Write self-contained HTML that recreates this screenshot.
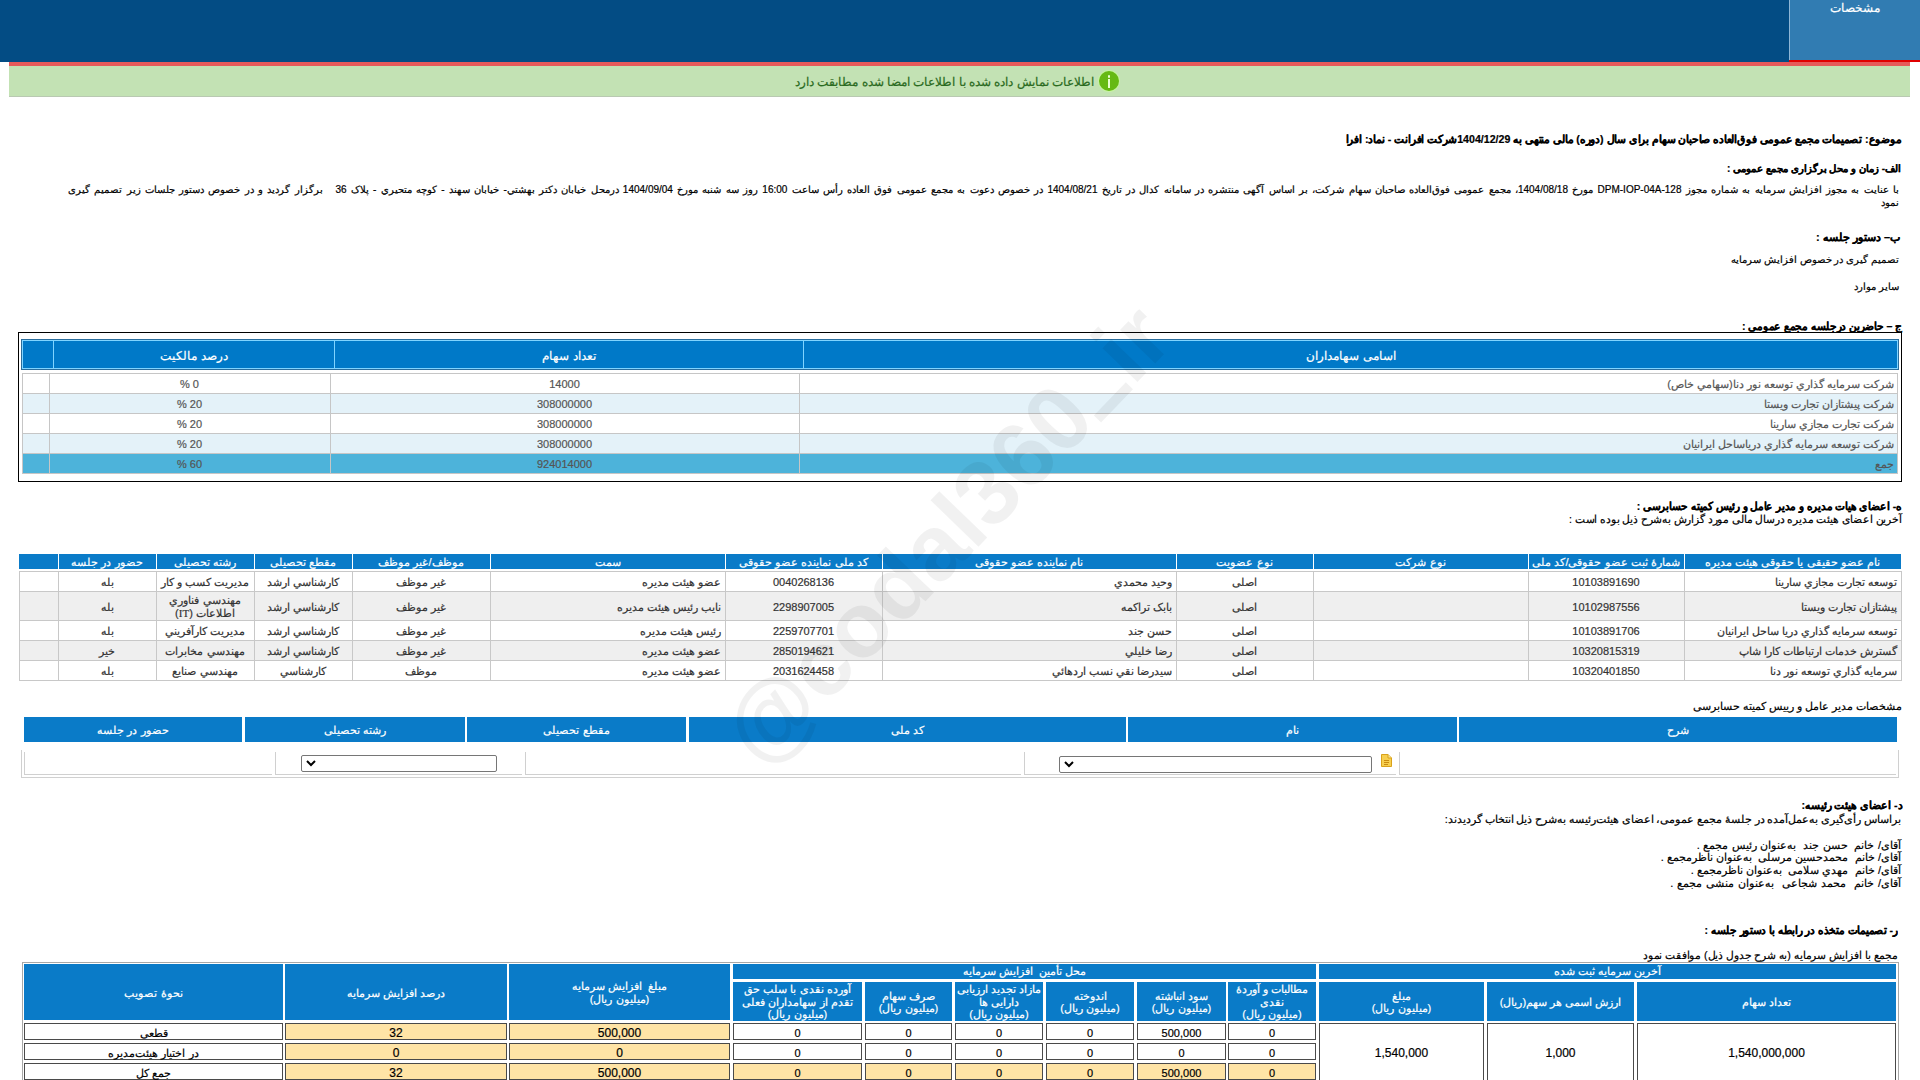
<!DOCTYPE html>
<html lang="fa" dir="rtl">
<head>
<meta charset="utf-8">
<title>codal</title>
<style>
html,body{margin:0;padding:0;background:#fff;}
body{width:1920px;height:1080px;overflow:hidden;position:relative;font-family:"Liberation Sans",sans-serif;direction:rtl;color:#000;}
.p{position:absolute;}
.t{white-space:nowrap;overflow:visible;-webkit-text-stroke:0.2px currentColor;}
</style>
</head>
<body>
<div class="p" style="left:0px;top:0px;width:1920px;height:62px;background:#034c84;"></div>
<div class="p" style="left:1789px;top:0px;width:131px;height:60px;background:#317cb2;"></div>
<div class="p" style="left:1789px;top:0px;width:1px;height:60px;background:#8fb6d6;"></div>
<div class="p t" style="left:1789px;top:-0.2px;width:131px;height:16px;line-height:16px;font-size:12px;color:#fff;text-align:center;">مشخصات</div>
<div class="p" style="left:1789px;top:60px;width:131px;height:2px;background:#e00000;"></div>
<div class="p" style="left:9px;top:62px;width:1901px;height:4px;background:#e65a5a;"></div>
<div class="p" style="left:9px;top:66px;width:1901px;height:30px;background:#c3e2b4;"></div>
<div class="p" style="left:9px;top:96px;width:1901px;height:1px;background:#b9c9b2;"></div>
<div class="p t" style="left:600px;top:74.3px;width:494px;height:16px;line-height:16px;font-size:12px;color:#2a6a1e;text-align:right;">اطلاعات نمایش داده شده با اطلاعات امضا شده مطابقت دارد</div>
<div class="p" style="left:1098.5px;top:70.8px;width:20px;height:20px;border-radius:50%;background:#66b914;box-shadow:0 0 0 1px rgba(200,255,150,0.6);"></div>
<div class="p" style="left:1107.5px;top:75px;width:2.5px;height:2.5px;background:#e8ffd0;border-radius:1px;"></div>
<div class="p" style="left:1107.8px;top:79px;width:2.0px;height:8.5px;background:#e8ffd0;"></div>
<div class="p t" style="left:900px;top:131.5px;width:1001px;height:15px;line-height:15px;font-size:11px;color:#000;text-align:right;font-weight:bold;"><span style="display:inline-block;transform:scaleX(0.966);transform-origin:100% 50%;">موضوع: تصمیمات مجمع عمومی فوق‌العاده صاحبان سهام برای سال (دوره) مالی منتهی به 1404/12/29شرکت افرانت - نماد: افرا</span></div>
<div class="p t" style="left:1200px;top:162.0px;width:701px;height:14px;line-height:14px;font-size:10px;color:#000;text-align:right;font-weight:bold;">الف- زمان و محل برگزاری مجمع عمومی :</div>
<div class="p t" style="left:0px;top:182.5px;width:1899px;height:14px;line-height:14px;font-size:10px;color:#000;text-align:right;word-spacing:1.5px;">با عنایت به مجوز افزایش سرمایه به شماره مجوز DPM-IOP-04A-128 مورخ 1404/08/18، مجمع عمومی فوق‌العاده صاحبان سهام شرکت، بر اساس آگهی منتشره در سامانه کدال در تاریخ 1404/08/21 در خصوص دعوت به مجمع عمومی فوق العاده رأس ساعت 16:00 روز سه شنبه مورخ 1404/09/04 درمحل خیابان دکتر بهشتي- خیابان سهند - کوچه متحیري - پلاک 36&nbsp;&nbsp; برگزار گردید و در خصوص دستور جلسات زیر تصمیم گیری</div>
<div class="p t" style="left:1500px;top:195.5px;width:399px;height:14px;line-height:14px;font-size:10px;color:#000;text-align:right;">نمود</div>
<div class="p t" style="left:1500px;top:229.5px;width:400px;height:15px;line-height:15px;font-size:11px;color:#000;text-align:right;font-weight:bold;">ب– دستور جلسه :</div>
<div class="p t" style="left:1500px;top:253.0px;width:399px;height:14px;line-height:14px;font-size:10px;color:#000;text-align:right;">تصمیم گیری در خصوص افزایش سرمایه</div>
<div class="p t" style="left:1500px;top:280.0px;width:399px;height:14px;line-height:14px;font-size:10px;color:#000;text-align:right;">سایر موارد</div>
<div class="p t" style="left:1500px;top:318.5px;width:402px;height:15px;line-height:15px;font-size:11px;color:#000;text-align:right;font-weight:bold;"><span style="display:inline-block;transform:scaleX(0.958);transform-origin:100% 50%;">ج – حاضرین درجلسه مجمع عمومی :</span></div>
<div class="p" style="left:18px;top:332px;width:1884px;height:150px;box-sizing:border-box;border:1px solid #000;"></div>
<div class="p" style="left:21px;top:339px;width:1878px;height:31px;background:#0079c8;box-sizing:border-box;border:1px solid #2a6d9c;"></div>
<div class="p" style="left:22px;top:340px;width:32px;height:29px;box-sizing:border-box;border:1px solid #80d4ff;"></div>
<div class="p" style="left:53px;top:340px;width:282px;height:29px;box-sizing:border-box;border:1px solid #80d4ff;"></div>
<div class="p" style="left:334px;top:340px;width:470px;height:29px;box-sizing:border-box;border:1px solid #80d4ff;"></div>
<div class="p" style="left:803px;top:340px;width:1095px;height:29px;box-sizing:border-box;border:1px solid #80d4ff;"></div>
<div class="p t" style="left:54px;top:347.5px;width:280px;height:16px;line-height:16px;font-size:12px;color:#fff;text-align:center;">درصد مالکیت</div>
<div class="p t" style="left:335px;top:347.5px;width:468px;height:16px;line-height:16px;font-size:12px;color:#fff;text-align:center;">تعداد سهام</div>
<div class="p t" style="left:804px;top:347.5px;width:1094px;height:16px;line-height:16px;font-size:12px;color:#fff;text-align:center;">اسامی سهامداران</div>
<div class="p" style="left:22px;top:373px;width:1876px;height:20px;background:#fff;"></div>
<div class="p t" style="left:800px;top:376.5px;width:1094px;height:15px;line-height:15px;font-size:11px;color:#555;text-align:right;">شرکت سرمایه گذاري توسعه نور دنا(سهامي خاص)</div>
<div class="p t" style="left:330px;top:376.5px;width:469px;height:15px;line-height:15px;font-size:11px;color:#555;text-align:center;">14000</div>
<div class="p t" style="left:49px;top:376.5px;width:281px;height:15px;line-height:15px;font-size:11px;color:#555;text-align:center;direction:ltr;">% 0</div>
<div class="p" style="left:22px;top:393px;width:1876px;height:20px;background:#e4f2f9;"></div>
<div class="p t" style="left:800px;top:396.5px;width:1094px;height:15px;line-height:15px;font-size:11px;color:#555;text-align:right;">شرکت پيشتازان تجارت ويستا</div>
<div class="p t" style="left:330px;top:396.5px;width:469px;height:15px;line-height:15px;font-size:11px;color:#555;text-align:center;">308000000</div>
<div class="p t" style="left:49px;top:396.5px;width:281px;height:15px;line-height:15px;font-size:11px;color:#555;text-align:center;direction:ltr;">% 20</div>
<div class="p" style="left:22px;top:413px;width:1876px;height:20px;background:#fff;"></div>
<div class="p t" style="left:800px;top:416.5px;width:1094px;height:15px;line-height:15px;font-size:11px;color:#555;text-align:right;">شرکت تجارت مجازي سارينا</div>
<div class="p t" style="left:330px;top:416.5px;width:469px;height:15px;line-height:15px;font-size:11px;color:#555;text-align:center;">308000000</div>
<div class="p t" style="left:49px;top:416.5px;width:281px;height:15px;line-height:15px;font-size:11px;color:#555;text-align:center;direction:ltr;">% 20</div>
<div class="p" style="left:22px;top:433px;width:1876px;height:20px;background:#e4f2f9;"></div>
<div class="p t" style="left:800px;top:436.5px;width:1094px;height:15px;line-height:15px;font-size:11px;color:#555;text-align:right;">شرکت توسعه سرمايه گذاري درياساحل ايرانيان</div>
<div class="p t" style="left:330px;top:436.5px;width:469px;height:15px;line-height:15px;font-size:11px;color:#555;text-align:center;">308000000</div>
<div class="p t" style="left:49px;top:436.5px;width:281px;height:15px;line-height:15px;font-size:11px;color:#555;text-align:center;direction:ltr;">% 20</div>
<div class="p" style="left:22px;top:453px;width:1876px;height:20px;background:#4db3da;"></div>
<div class="p t" style="left:800px;top:456.5px;width:1094px;height:15px;line-height:15px;font-size:11px;color:#555;text-align:right;">جمع</div>
<div class="p t" style="left:330px;top:456.5px;width:469px;height:15px;line-height:15px;font-size:11px;color:#555;text-align:center;">924014000</div>
<div class="p t" style="left:49px;top:456.5px;width:281px;height:15px;line-height:15px;font-size:11px;color:#555;text-align:center;direction:ltr;">% 60</div>
<div class="p" style="left:22px;top:373px;width:1876px;height:1px;background:#c6c6c6;"></div>
<div class="p" style="left:22px;top:393px;width:1876px;height:1px;background:#c6c6c6;"></div>
<div class="p" style="left:22px;top:413px;width:1876px;height:1px;background:#c6c6c6;"></div>
<div class="p" style="left:22px;top:433px;width:1876px;height:1px;background:#c6c6c6;"></div>
<div class="p" style="left:22px;top:453px;width:1876px;height:1px;background:#c6c6c6;"></div>
<div class="p" style="left:22px;top:473px;width:1876px;height:1px;background:#c6c6c6;"></div>
<div class="p" style="left:22px;top:373px;width:1px;height:101px;background:#c6c6c6;"></div>
<div class="p" style="left:49px;top:373px;width:1px;height:101px;background:#c6c6c6;"></div>
<div class="p" style="left:330px;top:373px;width:1px;height:101px;background:#c6c6c6;"></div>
<div class="p" style="left:799px;top:373px;width:1px;height:101px;background:#c6c6c6;"></div>
<div class="p" style="left:1897px;top:373px;width:1px;height:101px;background:#c6c6c6;"></div>
<div class="p t" style="left:1200px;top:498.5px;width:702px;height:15px;line-height:15px;font-size:11px;color:#000;text-align:right;font-weight:bold;"><span style="display:inline-block;transform:scaleX(0.954);transform-origin:100% 50%;">ه- اعضای هیات مدیره و مدیر عامل و رئیس کمیته حسابرسی :</span></div>
<div class="p t" style="left:1200px;top:512.0px;width:702px;height:15px;line-height:15px;font-size:11px;color:#000;text-align:right;"><span style="display:inline-block;transform:scaleX(0.968);transform-origin:100% 50%;">آخرین اعضای هیئت مدیره درسال مالی مورد گزارش به‌شرح ذیل بوده است :</span></div>
<div class="p" style="left:19px;top:554px;width:1882px;height:15px;background:#0a7bc8;"></div>
<div class="p" style="left:58px;top:554px;width:1px;height:15px;background:#fff;"></div>
<div class="p" style="left:156px;top:554px;width:1px;height:15px;background:#fff;"></div>
<div class="p" style="left:254px;top:554px;width:1px;height:15px;background:#fff;"></div>
<div class="p" style="left:352px;top:554px;width:1px;height:15px;background:#fff;"></div>
<div class="p" style="left:490px;top:554px;width:1px;height:15px;background:#fff;"></div>
<div class="p" style="left:725px;top:554px;width:1px;height:15px;background:#fff;"></div>
<div class="p" style="left:882px;top:554px;width:1px;height:15px;background:#fff;"></div>
<div class="p" style="left:1176px;top:554px;width:1px;height:15px;background:#fff;"></div>
<div class="p" style="left:1313px;top:554px;width:1px;height:15px;background:#fff;"></div>
<div class="p" style="left:1528px;top:554px;width:1px;height:15px;background:#fff;"></div>
<div class="p" style="left:1684px;top:554px;width:1px;height:15px;background:#fff;"></div>
<div class="p t" style="left:58px;top:554.5px;width:98px;height:15px;line-height:15px;font-size:11px;color:#fff;text-align:center;">حضور در جلسه</div>
<div class="p t" style="left:156px;top:554.5px;width:98px;height:15px;line-height:15px;font-size:11px;color:#fff;text-align:center;">رشته تحصیلی</div>
<div class="p t" style="left:254px;top:554.5px;width:98px;height:15px;line-height:15px;font-size:11px;color:#fff;text-align:center;">مقطع تحصیلی</div>
<div class="p t" style="left:352px;top:554.5px;width:138px;height:15px;line-height:15px;font-size:11px;color:#fff;text-align:center;">موظف/غیر موظف</div>
<div class="p t" style="left:490px;top:554.5px;width:235px;height:15px;line-height:15px;font-size:11px;color:#fff;text-align:center;">سمت</div>
<div class="p t" style="left:725px;top:554.5px;width:157px;height:15px;line-height:15px;font-size:11px;color:#fff;text-align:center;">کد ملی نماینده عضو حقوقی</div>
<div class="p t" style="left:882px;top:554.5px;width:294px;height:15px;line-height:15px;font-size:11px;color:#fff;text-align:center;">نام نماینده عضو حقوقی</div>
<div class="p t" style="left:1176px;top:554.5px;width:137px;height:15px;line-height:15px;font-size:11px;color:#fff;text-align:center;">نوع عضویت</div>
<div class="p t" style="left:1313px;top:554.5px;width:215px;height:15px;line-height:15px;font-size:11px;color:#fff;text-align:center;">نوع شرکت</div>
<div class="p t" style="left:1528px;top:554.5px;width:156px;height:15px;line-height:15px;font-size:11px;color:#fff;text-align:center;">شمارهٔ ثبت عضو حقوقی/کد ملی</div>
<div class="p t" style="left:1684px;top:554.5px;width:217px;height:15px;line-height:15px;font-size:11px;color:#fff;text-align:center;">نام عضو حقیقی یا حقوقی هیئت مدیره</div>
<div class="p" style="left:19px;top:571px;width:1882px;height:20px;background:#fff;"></div>
<div class="p t" style="left:1684px;top:575.0px;width:217px;height:15px;line-height:15px;font-size:11px;color:#333;text-align:right;padding:0 4px;box-sizing:border-box;">توسعه تجارت مجازي سارينا</div>
<div class="p t" style="left:1528px;top:575.0px;width:156px;height:15px;line-height:15px;font-size:11px;color:#333;text-align:center;padding:0 4px;box-sizing:border-box;">10103891690</div>
<div class="p t" style="left:1176px;top:575.0px;width:137px;height:15px;line-height:15px;font-size:11px;color:#333;text-align:center;padding:0 4px;box-sizing:border-box;">اصلی</div>
<div class="p t" style="left:882px;top:575.0px;width:294px;height:15px;line-height:15px;font-size:11px;color:#333;text-align:right;padding:0 4px;box-sizing:border-box;">وحيد محمدي</div>
<div class="p t" style="left:725px;top:575.0px;width:157px;height:15px;line-height:15px;font-size:11px;color:#333;text-align:center;padding:0 4px;box-sizing:border-box;">0040268136</div>
<div class="p t" style="left:490px;top:575.0px;width:235px;height:15px;line-height:15px;font-size:11px;color:#333;text-align:right;padding:0 4px;box-sizing:border-box;">عضو هيئت مديره</div>
<div class="p t" style="left:352px;top:575.0px;width:138px;height:15px;line-height:15px;font-size:11px;color:#333;text-align:center;padding:0 4px;box-sizing:border-box;">غير موظف</div>
<div class="p t" style="left:254px;top:575.0px;width:98px;height:15px;line-height:15px;font-size:11px;color:#333;text-align:center;padding:0 4px;box-sizing:border-box;">كارشناسي ارشد</div>
<div class="p t" style="left:156px;top:575.0px;width:98px;height:15px;line-height:15px;font-size:11px;color:#333;text-align:center;padding:0 4px;box-sizing:border-box;">مديريت كسب و كار</div>
<div class="p t" style="left:58px;top:575.0px;width:98px;height:15px;line-height:15px;font-size:11px;color:#333;text-align:center;padding:0 4px;box-sizing:border-box;">بله</div>
<div class="p" style="left:19px;top:591px;width:1882px;height:29px;background:#efefef;"></div>
<div class="p t" style="left:1684px;top:599.5px;width:217px;height:15px;line-height:15px;font-size:11px;color:#333;text-align:right;padding:0 4px;box-sizing:border-box;">پيشتازان تجارت ويستا</div>
<div class="p t" style="left:1528px;top:599.5px;width:156px;height:15px;line-height:15px;font-size:11px;color:#333;text-align:center;padding:0 4px;box-sizing:border-box;">10102987556</div>
<div class="p t" style="left:1176px;top:599.5px;width:137px;height:15px;line-height:15px;font-size:11px;color:#333;text-align:center;padding:0 4px;box-sizing:border-box;">اصلی</div>
<div class="p t" style="left:882px;top:599.5px;width:294px;height:15px;line-height:15px;font-size:11px;color:#333;text-align:right;padding:0 4px;box-sizing:border-box;">بابک تراکمه</div>
<div class="p t" style="left:725px;top:599.5px;width:157px;height:15px;line-height:15px;font-size:11px;color:#333;text-align:center;padding:0 4px;box-sizing:border-box;">2298907005</div>
<div class="p t" style="left:490px;top:599.5px;width:235px;height:15px;line-height:15px;font-size:11px;color:#333;text-align:right;padding:0 4px;box-sizing:border-box;">نايب رئيس هيئت مديره</div>
<div class="p t" style="left:352px;top:599.5px;width:138px;height:15px;line-height:15px;font-size:11px;color:#333;text-align:center;padding:0 4px;box-sizing:border-box;">غير موظف</div>
<div class="p t" style="left:254px;top:599.5px;width:98px;height:15px;line-height:15px;font-size:11px;color:#333;text-align:center;padding:0 4px;box-sizing:border-box;">كارشناسي ارشد</div>
<div class="p t" style="left:156px;top:593.5px;width:98px;line-height:13px;font-size:11px;color:#333;text-align:center;">مهندسي فناوري<br>اطلاعات (<span style="font-family:'Liberation Serif',serif">IT</span>)</div>
<div class="p t" style="left:58px;top:599.5px;width:98px;height:15px;line-height:15px;font-size:11px;color:#333;text-align:center;padding:0 4px;box-sizing:border-box;">بله</div>
<div class="p" style="left:19px;top:620px;width:1882px;height:20px;background:#fff;"></div>
<div class="p t" style="left:1684px;top:624.0px;width:217px;height:15px;line-height:15px;font-size:11px;color:#333;text-align:right;padding:0 4px;box-sizing:border-box;">توسعه سرمايه گذاري دريا ساحل ايرانيان</div>
<div class="p t" style="left:1528px;top:624.0px;width:156px;height:15px;line-height:15px;font-size:11px;color:#333;text-align:center;padding:0 4px;box-sizing:border-box;">10103891706</div>
<div class="p t" style="left:1176px;top:624.0px;width:137px;height:15px;line-height:15px;font-size:11px;color:#333;text-align:center;padding:0 4px;box-sizing:border-box;">اصلی</div>
<div class="p t" style="left:882px;top:624.0px;width:294px;height:15px;line-height:15px;font-size:11px;color:#333;text-align:right;padding:0 4px;box-sizing:border-box;">حسن جند</div>
<div class="p t" style="left:725px;top:624.0px;width:157px;height:15px;line-height:15px;font-size:11px;color:#333;text-align:center;padding:0 4px;box-sizing:border-box;">2259707701</div>
<div class="p t" style="left:490px;top:624.0px;width:235px;height:15px;line-height:15px;font-size:11px;color:#333;text-align:right;padding:0 4px;box-sizing:border-box;">رئيس هيئت مديره</div>
<div class="p t" style="left:352px;top:624.0px;width:138px;height:15px;line-height:15px;font-size:11px;color:#333;text-align:center;padding:0 4px;box-sizing:border-box;">غير موظف</div>
<div class="p t" style="left:254px;top:624.0px;width:98px;height:15px;line-height:15px;font-size:11px;color:#333;text-align:center;padding:0 4px;box-sizing:border-box;">كارشناسي ارشد</div>
<div class="p t" style="left:156px;top:624.0px;width:98px;height:15px;line-height:15px;font-size:11px;color:#333;text-align:center;padding:0 4px;box-sizing:border-box;">مديريت كارآفريني</div>
<div class="p t" style="left:58px;top:624.0px;width:98px;height:15px;line-height:15px;font-size:11px;color:#333;text-align:center;padding:0 4px;box-sizing:border-box;">بله</div>
<div class="p" style="left:19px;top:640px;width:1882px;height:20px;background:#efefef;"></div>
<div class="p t" style="left:1684px;top:644.0px;width:217px;height:15px;line-height:15px;font-size:11px;color:#333;text-align:right;padding:0 4px;box-sizing:border-box;">گسترش خدمات ارتباطات كارا شاپ</div>
<div class="p t" style="left:1528px;top:644.0px;width:156px;height:15px;line-height:15px;font-size:11px;color:#333;text-align:center;padding:0 4px;box-sizing:border-box;">10320815319</div>
<div class="p t" style="left:1176px;top:644.0px;width:137px;height:15px;line-height:15px;font-size:11px;color:#333;text-align:center;padding:0 4px;box-sizing:border-box;">اصلی</div>
<div class="p t" style="left:882px;top:644.0px;width:294px;height:15px;line-height:15px;font-size:11px;color:#333;text-align:right;padding:0 4px;box-sizing:border-box;">رضا خليلي</div>
<div class="p t" style="left:725px;top:644.0px;width:157px;height:15px;line-height:15px;font-size:11px;color:#333;text-align:center;padding:0 4px;box-sizing:border-box;">2850194621</div>
<div class="p t" style="left:490px;top:644.0px;width:235px;height:15px;line-height:15px;font-size:11px;color:#333;text-align:right;padding:0 4px;box-sizing:border-box;">عضو هيئت مديره</div>
<div class="p t" style="left:352px;top:644.0px;width:138px;height:15px;line-height:15px;font-size:11px;color:#333;text-align:center;padding:0 4px;box-sizing:border-box;">غير موظف</div>
<div class="p t" style="left:254px;top:644.0px;width:98px;height:15px;line-height:15px;font-size:11px;color:#333;text-align:center;padding:0 4px;box-sizing:border-box;">كارشناسي ارشد</div>
<div class="p t" style="left:156px;top:644.0px;width:98px;height:15px;line-height:15px;font-size:11px;color:#333;text-align:center;padding:0 4px;box-sizing:border-box;">مهندسي مخابرات</div>
<div class="p t" style="left:58px;top:644.0px;width:98px;height:15px;line-height:15px;font-size:11px;color:#333;text-align:center;padding:0 4px;box-sizing:border-box;">خير</div>
<div class="p" style="left:19px;top:660px;width:1882px;height:20px;background:#fff;"></div>
<div class="p t" style="left:1684px;top:664.0px;width:217px;height:15px;line-height:15px;font-size:11px;color:#333;text-align:right;padding:0 4px;box-sizing:border-box;">سرمايه گذاري توسعه نور دنا</div>
<div class="p t" style="left:1528px;top:664.0px;width:156px;height:15px;line-height:15px;font-size:11px;color:#333;text-align:center;padding:0 4px;box-sizing:border-box;">10320401850</div>
<div class="p t" style="left:1176px;top:664.0px;width:137px;height:15px;line-height:15px;font-size:11px;color:#333;text-align:center;padding:0 4px;box-sizing:border-box;">اصلی</div>
<div class="p t" style="left:882px;top:664.0px;width:294px;height:15px;line-height:15px;font-size:11px;color:#333;text-align:right;padding:0 4px;box-sizing:border-box;">سيدرضا نقي نسب اردهائي</div>
<div class="p t" style="left:725px;top:664.0px;width:157px;height:15px;line-height:15px;font-size:11px;color:#333;text-align:center;padding:0 4px;box-sizing:border-box;">2031624458</div>
<div class="p t" style="left:490px;top:664.0px;width:235px;height:15px;line-height:15px;font-size:11px;color:#333;text-align:right;padding:0 4px;box-sizing:border-box;">عضو هيئت مديره</div>
<div class="p t" style="left:352px;top:664.0px;width:138px;height:15px;line-height:15px;font-size:11px;color:#333;text-align:center;padding:0 4px;box-sizing:border-box;">موظف</div>
<div class="p t" style="left:254px;top:664.0px;width:98px;height:15px;line-height:15px;font-size:11px;color:#333;text-align:center;padding:0 4px;box-sizing:border-box;">كارشناسي</div>
<div class="p t" style="left:156px;top:664.0px;width:98px;height:15px;line-height:15px;font-size:11px;color:#333;text-align:center;padding:0 4px;box-sizing:border-box;">مهندسي صنايع</div>
<div class="p t" style="left:58px;top:664.0px;width:98px;height:15px;line-height:15px;font-size:11px;color:#333;text-align:center;padding:0 4px;box-sizing:border-box;">بله</div>
<div class="p" style="left:19px;top:571px;width:1882px;height:1px;background:#c8c8c8;"></div>
<div class="p" style="left:19px;top:591px;width:1882px;height:1px;background:#c8c8c8;"></div>
<div class="p" style="left:19px;top:620px;width:1882px;height:1px;background:#c8c8c8;"></div>
<div class="p" style="left:19px;top:640px;width:1882px;height:1px;background:#c8c8c8;"></div>
<div class="p" style="left:19px;top:660px;width:1882px;height:1px;background:#c8c8c8;"></div>
<div class="p" style="left:19px;top:680px;width:1882px;height:1px;background:#c8c8c8;"></div>
<div class="p" style="left:19px;top:571px;width:1px;height:110px;background:#c8c8c8;"></div>
<div class="p" style="left:58px;top:571px;width:1px;height:110px;background:#c8c8c8;"></div>
<div class="p" style="left:156px;top:571px;width:1px;height:110px;background:#c8c8c8;"></div>
<div class="p" style="left:254px;top:571px;width:1px;height:110px;background:#c8c8c8;"></div>
<div class="p" style="left:352px;top:571px;width:1px;height:110px;background:#c8c8c8;"></div>
<div class="p" style="left:490px;top:571px;width:1px;height:110px;background:#c8c8c8;"></div>
<div class="p" style="left:725px;top:571px;width:1px;height:110px;background:#c8c8c8;"></div>
<div class="p" style="left:882px;top:571px;width:1px;height:110px;background:#c8c8c8;"></div>
<div class="p" style="left:1176px;top:571px;width:1px;height:110px;background:#c8c8c8;"></div>
<div class="p" style="left:1313px;top:571px;width:1px;height:110px;background:#c8c8c8;"></div>
<div class="p" style="left:1528px;top:571px;width:1px;height:110px;background:#c8c8c8;"></div>
<div class="p" style="left:1684px;top:571px;width:1px;height:110px;background:#c8c8c8;"></div>
<div class="p" style="left:1901px;top:571px;width:1px;height:110px;background:#c8c8c8;"></div>
<div class="p t" style="left:1200px;top:699.0px;width:702px;height:15px;line-height:15px;font-size:11px;color:#000;text-align:right;">مشخصات مدیر عامل و رییس کمیته حسابرسی</div>
<div class="p" style="left:24px;top:717px;width:218px;height:25px;background:#0a7bc8;"></div>
<div class="p t" style="left:24px;top:722.5px;width:218px;height:15px;line-height:15px;font-size:11px;color:#fff;text-align:center;">حضور در جلسه</div>
<div class="p" style="left:245px;top:717px;width:220px;height:25px;background:#0a7bc8;"></div>
<div class="p t" style="left:245px;top:722.5px;width:220px;height:15px;line-height:15px;font-size:11px;color:#fff;text-align:center;">رشته تحصیلی</div>
<div class="p" style="left:467px;top:717px;width:219px;height:25px;background:#0a7bc8;"></div>
<div class="p t" style="left:467px;top:722.5px;width:219px;height:15px;line-height:15px;font-size:11px;color:#fff;text-align:center;">مقطع تحصیلی</div>
<div class="p" style="left:689px;top:717px;width:437px;height:25px;background:#0a7bc8;"></div>
<div class="p t" style="left:689px;top:722.5px;width:437px;height:15px;line-height:15px;font-size:11px;color:#fff;text-align:center;">کد ملی</div>
<div class="p" style="left:1128px;top:717px;width:329px;height:25px;background:#0a7bc8;"></div>
<div class="p t" style="left:1128px;top:722.5px;width:329px;height:15px;line-height:15px;font-size:11px;color:#fff;text-align:center;">نام</div>
<div class="p" style="left:1459px;top:717px;width:438px;height:25px;background:#0a7bc8;"></div>
<div class="p t" style="left:1459px;top:722.5px;width:438px;height:15px;line-height:15px;font-size:11px;color:#fff;text-align:center;">شرح</div>
<div class="p" style="left:21px;top:750px;width:1px;height:28px;background:#d0d0d0;"></div>
<div class="p" style="left:21px;top:777px;width:1878px;height:1px;background:#d0d0d0;"></div>
<div class="p" style="left:1898px;top:750px;width:1px;height:28px;background:#d0d0d0;"></div>
<div class="p" style="left:24px;top:752px;width:1px;height:23px;background:#d0d0d0;"></div>
<div class="p" style="left:24px;top:774px;width:248px;height:1px;background:#d0d0d0;"></div>
<div class="p" style="left:275px;top:752px;width:1px;height:23px;background:#d0d0d0;"></div>
<div class="p" style="left:275px;top:774px;width:247px;height:1px;background:#d0d0d0;"></div>
<div class="p" style="left:525px;top:752px;width:1px;height:23px;background:#d0d0d0;"></div>
<div class="p" style="left:525px;top:774px;width:496px;height:1px;background:#d0d0d0;"></div>
<div class="p" style="left:1024px;top:752px;width:1px;height:23px;background:#d0d0d0;"></div>
<div class="p" style="left:1024px;top:774px;width:372px;height:1px;background:#d0d0d0;"></div>
<div class="p" style="left:1399px;top:752px;width:1px;height:23px;background:#d0d0d0;"></div>
<div class="p" style="left:1399px;top:774px;width:497px;height:1px;background:#d0d0d0;"></div>
<div class="p" style="left:301px;top:755px;width:196px;height:17px;background:#fff;box-sizing:border-box;border:1px solid #767676;border-radius:2px;"></div>
<div class="p" style="left:1059px;top:756px;width:313px;height:17px;background:#fff;box-sizing:border-box;border:1px solid #767676;border-radius:2px;"></div>
<svg class="p" style="left:305px;top:759px" width="12" height="9" viewBox="0 0 12 9"><path d="M2 2 L6 6 L10 2" stroke="#000" stroke-width="2" fill="none"/></svg>
<svg class="p" style="left:1063px;top:760px" width="12" height="9" viewBox="0 0 12 9"><path d="M2 2 L6 6 L10 2" stroke="#000" stroke-width="2" fill="none"/></svg>
<svg class="p" style="left:1380px;top:753px" width="13" height="15" viewBox="0 0 13 15"><path d="M1.5 1.5 H8 L11.5 5 V13.5 H1.5 Z" fill="#f7cf4f" stroke="#d9a21b" stroke-width="1"/><path d="M8 1.5 V5 H11.5" fill="#fbe79a" stroke="#d9a21b" stroke-width="1"/><path d="M4 7.5 H9 M4 9.5 H9 M4 11.5 H8" stroke="#c98b10" stroke-width="1"/></svg>
<div class="p t" style="left:1200px;top:798.0px;width:702px;height:15px;line-height:15px;font-size:11px;color:#000;text-align:right;font-weight:bold;"><span style="display:inline-block;transform:scaleX(0.975);transform-origin:100% 50%;">د- اعضای هیئت رئیسه:</span></div>
<div class="p t" style="left:1000px;top:811.5px;width:901px;height:15px;line-height:15px;font-size:11px;color:#000;text-align:right;word-spacing:-0.3px;">براساس رأی‌گیری به‌عمل‌آمده در جلسهٔ مجمع عمومی، اعضای هیئت‌رئیسه به‌شرح ذیل انتخاب گردیدند:</div>
<div class="p t" style="left:1200px;top:837.5px;width:701px;height:15px;line-height:15px;font-size:11px;color:#000;text-align:right;word-spacing:0.4px;">آقای/ خانم&nbsp; حسن جند&nbsp; به‌عنوان رئیس مجمع .</div>
<div class="p t" style="left:1200px;top:850.3px;width:701px;height:15px;line-height:15px;font-size:11px;color:#000;text-align:right;word-spacing:0.1px;">آقای/ خانم&nbsp; محمدحسین مرسلی&nbsp; به‌عنوان ناظرمجمع .</div>
<div class="p t" style="left:1200px;top:863.1px;width:701px;height:15px;line-height:15px;font-size:11px;color:#000;text-align:right;word-spacing:0.1px;">آقای/ خانم&nbsp; مهدي سلامی&nbsp; به‌عنوان ناظرمجمع .</div>
<div class="p t" style="left:1200px;top:875.9px;width:701px;height:15px;line-height:15px;font-size:11px;color:#000;text-align:right;word-spacing:0.9px;">آقای/ خانم&nbsp; محمد شجاعی&nbsp; به‌عنوان منشی مجمع .</div>
<div class="p t" style="left:1200px;top:922.5px;width:698px;height:15px;line-height:15px;font-size:11px;color:#000;text-align:right;font-weight:bold;"><span style="display:inline-block;transform:scaleX(0.953);transform-origin:100% 50%;">ر- تصمیمات متخذه در رابطه با دستور جلسه :</span></div>
<div class="p t" style="left:1200px;top:947.5px;width:698px;height:15px;line-height:15px;font-size:11px;color:#000;text-align:right;"><span style="display:inline-block;transform:scaleX(0.97);transform-origin:100% 50%;">مجمع با افزایش سرمایه (به شرح جدول ذیل) موافقت نمود</span></div>
<div class="p" style="left:22px;top:962px;width:1877px;height:128px;box-sizing:border-box;border:1px solid #a8a8a8;"></div>
<div class="p" style="left:733px;top:964px;width:583px;height:15px;background:#0a7bc8;"></div>
<div class="p t" style="left:733px;top:964.0px;width:583px;height:15px;line-height:15px;font-size:11px;color:#fff;text-align:center;">محل تأمین&nbsp; افزایش سرمایه</div>
<div class="p" style="left:1319px;top:964px;width:577px;height:15px;background:#0a7bc8;"></div>
<div class="p t" style="left:1319px;top:964.0px;width:577px;height:15px;line-height:15px;font-size:11px;color:#fff;text-align:center;">آخرین سرمایه ثبت شده</div>
<div class="p" style="left:24px;top:964px;width:259px;height:56px;background:#0a7bc8;"></div>
<div class="p" style="left:285px;top:964px;width:222px;height:56px;background:#0a7bc8;"></div>
<div class="p" style="left:509px;top:964px;width:221px;height:56px;background:#0a7bc8;"></div>
<div class="p t" style="left:24px;top:985.5px;width:259px;height:15px;line-height:15px;font-size:11px;color:#fff;text-align:center;">نحوهٔ تصویب</div>
<div class="p t" style="left:285px;top:985.5px;width:222px;height:15px;line-height:15px;font-size:11px;color:#fff;text-align:center;">درصد افزایش سرمایه</div>
<div class="p t" style="left:509px;top:980px;width:221px;line-height:13px;font-size:11px;color:#fff;text-align:center;">مبلغ&nbsp; افزایش سرمایه<br>(میلیون ریال)</div>
<div class="p" style="left:733px;top:982px;width:129px;height:39px;background:#0a7bc8;"></div>
<div class="p t" style="left:733px;top:983.25px;width:129px;line-height:12.5px;font-size:11px;color:#fff;text-align:center;">آورده نقدی با سلب حق<br>تقدم از سهامداران فعلی<br>(میلیون ریال)</div>
<div class="p" style="left:865px;top:982px;width:87px;height:39px;background:#0a7bc8;"></div>
<div class="p t" style="left:865px;top:989.5px;width:87px;line-height:12.5px;font-size:11px;color:#fff;text-align:center;">صرف سهام<br>(میلیون ریال)</div>
<div class="p" style="left:955px;top:982px;width:88px;height:39px;background:#0a7bc8;"></div>
<div class="p t" style="left:955px;top:983.25px;width:88px;line-height:12.5px;font-size:11px;color:#fff;text-align:center;">مازاد تجدید ارزیابی<br>دارایی ها<br>(میلیون ریال)</div>
<div class="p" style="left:1046px;top:982px;width:88px;height:39px;background:#0a7bc8;"></div>
<div class="p t" style="left:1046px;top:989.5px;width:88px;line-height:12.5px;font-size:11px;color:#fff;text-align:center;">اندوخته<br>(میلیون ریال)</div>
<div class="p" style="left:1137px;top:982px;width:89px;height:39px;background:#0a7bc8;"></div>
<div class="p t" style="left:1137px;top:989.5px;width:89px;line-height:12.5px;font-size:11px;color:#fff;text-align:center;">سود انباشته<br>(میلیون ریال)</div>
<div class="p" style="left:1228px;top:982px;width:88px;height:39px;background:#0a7bc8;"></div>
<div class="p t" style="left:1228px;top:983.25px;width:88px;line-height:12.5px;font-size:11px;color:#fff;text-align:center;">مطالبات و آوردهٔ<br>نقدی<br>(میلیون ریال)</div>
<div class="p" style="left:1319px;top:982px;width:165px;height:39px;background:#0a7bc8;"></div>
<div class="p t" style="left:1319px;top:989.5px;width:165px;line-height:12.5px;font-size:11px;color:#fff;text-align:center;">مبلغ<br>(میلیون ریال)</div>
<div class="p" style="left:1487px;top:982px;width:147px;height:39px;background:#0a7bc8;"></div>
<div class="p t" style="left:1487px;top:995.75px;width:147px;line-height:12.5px;font-size:11px;color:#fff;text-align:center;">ارزش اسمی هر سهم(ریال)</div>
<div class="p" style="left:1637px;top:982px;width:259px;height:39px;background:#0a7bc8;"></div>
<div class="p t" style="left:1637px;top:995.75px;width:259px;line-height:12.5px;font-size:11px;color:#fff;text-align:center;">تعداد سهام</div>
<div class="p" style="left:24px;top:1023px;width:259px;height:17px;background:#fff;box-sizing:border-box;border:1px solid #4a4a4a;"></div>
<div class="p t" style="left:24px;top:1025.5px;width:259px;height:15px;line-height:15px;font-size:11px;color:#000;text-align:center;">قطعی</div>
<div class="p" style="left:285px;top:1023px;width:222px;height:17px;background:#ffe4a6;box-sizing:border-box;border:1px solid #4a4a4a;"></div>
<div class="p t" style="left:285px;top:1025.0px;width:222px;height:16px;line-height:16px;font-size:12px;color:#000;text-align:center;">32</div>
<div class="p" style="left:509px;top:1023px;width:221px;height:17px;background:#ffe4a6;box-sizing:border-box;border:1px solid #4a4a4a;"></div>
<div class="p t" style="left:509px;top:1025.0px;width:221px;height:16px;line-height:16px;font-size:12px;color:#000;text-align:center;">500,000</div>
<div class="p" style="left:733px;top:1023px;width:129px;height:17px;background:#fff;box-sizing:border-box;border:1px solid #4a4a4a;"></div>
<div class="p t" style="left:733px;top:1025.5px;width:129px;height:15px;line-height:15px;font-size:11px;color:#000;text-align:center;">0</div>
<div class="p" style="left:865px;top:1023px;width:87px;height:17px;background:#fff;box-sizing:border-box;border:1px solid #4a4a4a;"></div>
<div class="p t" style="left:865px;top:1025.5px;width:87px;height:15px;line-height:15px;font-size:11px;color:#000;text-align:center;">0</div>
<div class="p" style="left:955px;top:1023px;width:88px;height:17px;background:#fff;box-sizing:border-box;border:1px solid #4a4a4a;"></div>
<div class="p t" style="left:955px;top:1025.5px;width:88px;height:15px;line-height:15px;font-size:11px;color:#000;text-align:center;">0</div>
<div class="p" style="left:1046px;top:1023px;width:88px;height:17px;background:#fff;box-sizing:border-box;border:1px solid #4a4a4a;"></div>
<div class="p t" style="left:1046px;top:1025.5px;width:88px;height:15px;line-height:15px;font-size:11px;color:#000;text-align:center;">0</div>
<div class="p" style="left:1137px;top:1023px;width:89px;height:17px;background:#fff;box-sizing:border-box;border:1px solid #4a4a4a;"></div>
<div class="p t" style="left:1137px;top:1025.5px;width:89px;height:15px;line-height:15px;font-size:11px;color:#000;text-align:center;">500,000</div>
<div class="p" style="left:1228px;top:1023px;width:88px;height:17px;background:#fff;box-sizing:border-box;border:1px solid #4a4a4a;"></div>
<div class="p t" style="left:1228px;top:1025.5px;width:88px;height:15px;line-height:15px;font-size:11px;color:#000;text-align:center;">0</div>
<div class="p" style="left:24px;top:1043px;width:259px;height:17px;background:#fff;box-sizing:border-box;border:1px solid #4a4a4a;"></div>
<div class="p t" style="left:24px;top:1045.5px;width:259px;height:15px;line-height:15px;font-size:11px;color:#000;text-align:center;">در اختیار هیئت‌مدیره</div>
<div class="p" style="left:285px;top:1043px;width:222px;height:17px;background:#ffe4a6;box-sizing:border-box;border:1px solid #4a4a4a;"></div>
<div class="p t" style="left:285px;top:1045.0px;width:222px;height:16px;line-height:16px;font-size:12px;color:#000;text-align:center;">0</div>
<div class="p" style="left:509px;top:1043px;width:221px;height:17px;background:#ffe4a6;box-sizing:border-box;border:1px solid #4a4a4a;"></div>
<div class="p t" style="left:509px;top:1045.0px;width:221px;height:16px;line-height:16px;font-size:12px;color:#000;text-align:center;">0</div>
<div class="p" style="left:733px;top:1043px;width:129px;height:17px;background:#fff;box-sizing:border-box;border:1px solid #4a4a4a;"></div>
<div class="p t" style="left:733px;top:1045.5px;width:129px;height:15px;line-height:15px;font-size:11px;color:#000;text-align:center;">0</div>
<div class="p" style="left:865px;top:1043px;width:87px;height:17px;background:#fff;box-sizing:border-box;border:1px solid #4a4a4a;"></div>
<div class="p t" style="left:865px;top:1045.5px;width:87px;height:15px;line-height:15px;font-size:11px;color:#000;text-align:center;">0</div>
<div class="p" style="left:955px;top:1043px;width:88px;height:17px;background:#fff;box-sizing:border-box;border:1px solid #4a4a4a;"></div>
<div class="p t" style="left:955px;top:1045.5px;width:88px;height:15px;line-height:15px;font-size:11px;color:#000;text-align:center;">0</div>
<div class="p" style="left:1046px;top:1043px;width:88px;height:17px;background:#fff;box-sizing:border-box;border:1px solid #4a4a4a;"></div>
<div class="p t" style="left:1046px;top:1045.5px;width:88px;height:15px;line-height:15px;font-size:11px;color:#000;text-align:center;">0</div>
<div class="p" style="left:1137px;top:1043px;width:89px;height:17px;background:#fff;box-sizing:border-box;border:1px solid #4a4a4a;"></div>
<div class="p t" style="left:1137px;top:1045.5px;width:89px;height:15px;line-height:15px;font-size:11px;color:#000;text-align:center;">0</div>
<div class="p" style="left:1228px;top:1043px;width:88px;height:17px;background:#fff;box-sizing:border-box;border:1px solid #4a4a4a;"></div>
<div class="p t" style="left:1228px;top:1045.5px;width:88px;height:15px;line-height:15px;font-size:11px;color:#000;text-align:center;">0</div>
<div class="p" style="left:24px;top:1063px;width:259px;height:17px;background:#fff;box-sizing:border-box;border:1px solid #4a4a4a;"></div>
<div class="p t" style="left:24px;top:1065.5px;width:259px;height:15px;line-height:15px;font-size:11px;color:#000;text-align:center;">جمع کل</div>
<div class="p" style="left:285px;top:1063px;width:222px;height:17px;background:#ffe4a6;box-sizing:border-box;border:1px solid #4a4a4a;"></div>
<div class="p t" style="left:285px;top:1065.0px;width:222px;height:16px;line-height:16px;font-size:12px;color:#000;text-align:center;">32</div>
<div class="p" style="left:509px;top:1063px;width:221px;height:17px;background:#ffe4a6;box-sizing:border-box;border:1px solid #4a4a4a;"></div>
<div class="p t" style="left:509px;top:1065.0px;width:221px;height:16px;line-height:16px;font-size:12px;color:#000;text-align:center;">500,000</div>
<div class="p" style="left:733px;top:1063px;width:129px;height:17px;background:#ffe4a6;box-sizing:border-box;border:1px solid #4a4a4a;"></div>
<div class="p t" style="left:733px;top:1065.5px;width:129px;height:15px;line-height:15px;font-size:11px;color:#000;text-align:center;">0</div>
<div class="p" style="left:865px;top:1063px;width:87px;height:17px;background:#ffe4a6;box-sizing:border-box;border:1px solid #4a4a4a;"></div>
<div class="p t" style="left:865px;top:1065.5px;width:87px;height:15px;line-height:15px;font-size:11px;color:#000;text-align:center;">0</div>
<div class="p" style="left:955px;top:1063px;width:88px;height:17px;background:#ffe4a6;box-sizing:border-box;border:1px solid #4a4a4a;"></div>
<div class="p t" style="left:955px;top:1065.5px;width:88px;height:15px;line-height:15px;font-size:11px;color:#000;text-align:center;">0</div>
<div class="p" style="left:1046px;top:1063px;width:88px;height:17px;background:#ffe4a6;box-sizing:border-box;border:1px solid #4a4a4a;"></div>
<div class="p t" style="left:1046px;top:1065.5px;width:88px;height:15px;line-height:15px;font-size:11px;color:#000;text-align:center;">0</div>
<div class="p" style="left:1137px;top:1063px;width:89px;height:17px;background:#ffe4a6;box-sizing:border-box;border:1px solid #4a4a4a;"></div>
<div class="p t" style="left:1137px;top:1065.5px;width:89px;height:15px;line-height:15px;font-size:11px;color:#000;text-align:center;">500,000</div>
<div class="p" style="left:1228px;top:1063px;width:88px;height:17px;background:#ffe4a6;box-sizing:border-box;border:1px solid #4a4a4a;"></div>
<div class="p t" style="left:1228px;top:1065.5px;width:88px;height:15px;line-height:15px;font-size:11px;color:#000;text-align:center;">0</div>
<div class="p" style="left:1319px;top:1023px;width:165px;height:67px;background:#fff;box-sizing:border-box;border:1px solid #4a4a4a;"></div>
<div class="p" style="left:1487px;top:1023px;width:147px;height:67px;background:#fff;box-sizing:border-box;border:1px solid #4a4a4a;"></div>
<div class="p" style="left:1637px;top:1023px;width:259px;height:67px;background:#fff;box-sizing:border-box;border:1px solid #4a4a4a;"></div>
<div class="p t" style="left:1319px;top:1045.0px;width:165px;height:16px;line-height:16px;font-size:12px;color:#000;text-align:center;">1,540,000</div>
<div class="p t" style="left:1487px;top:1045.0px;width:147px;height:16px;line-height:16px;font-size:12px;color:#000;text-align:center;">1,000</div>
<div class="p t" style="left:1637px;top:1045.0px;width:259px;height:16px;line-height:16px;font-size:12px;color:#000;text-align:center;">1,540,000,000</div>
<div class="p" style="left:596px;top:474px;width:700px;height:120px;line-height:120px;font-size:92px;font-weight:bold;color:rgba(0,0,0,0.055);text-align:center;direction:ltr;white-space:nowrap;transform:rotate(-46deg);transform-origin:50% 50%;">@codal360<span style="display:inline-block;width:46px;height:10px;background:rgba(0,0,0,0.055);vertical-align:-2px;margin:0 2px;"></span>ir</div>
</body></html>
